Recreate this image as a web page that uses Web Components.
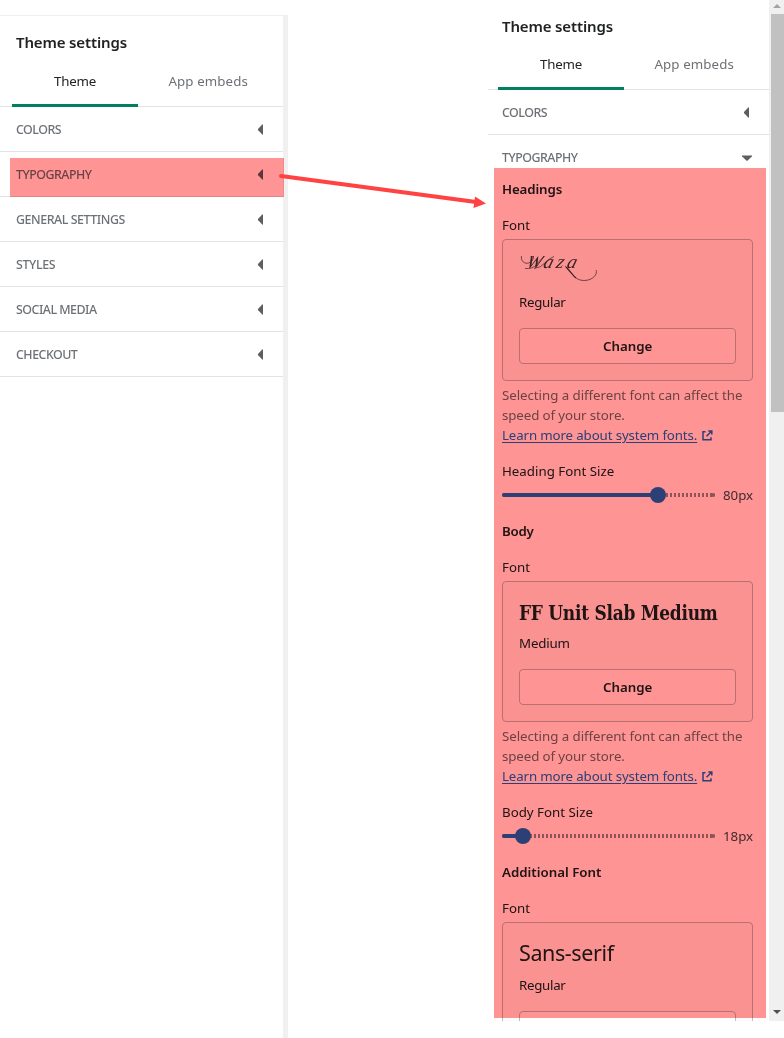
<!DOCTYPE html>
<html lang="en"><head><meta charset="utf-8"><title>Theme settings</title>
<style>
html,body{margin:0;height:1038px;overflow:hidden;background:#fff}
body{font:13.3px/20px "Noto Sans","Open Sans",sans-serif;color:#202223}
</style></head><body><theme-page></theme-page>
<script>
const define=(name,html,init)=>customElements.define(name,class extends HTMLElement{
  connectedCallback(){
    if(this.shadowRoot)return;
    this.attachShadow({mode:'open'}).innerHTML=html(this);
    if(init)init(this);
  }
});
/* One line of text, tracked so that it fills the given width. */
define('fit-text',e=>`<style>:host{display:inline-block;white-space:nowrap;width:${e.getAttribute('w')}px}</style><span><slot></slot></span>`,e=>{
  const s=e.shadowRoot.querySelector('span'),n=e.textContent.length;
  s.style.letterSpacing=((+e.getAttribute('w')-s.offsetWidth)/n)+'px';
});
define('caret-icon',e=>`<style>:host{display:block;width:20px;height:20px}svg{display:block}</style>
<svg width="20" height="20" viewBox="0 0 20 20"><path fill="#5c5f62" d="${e.hasAttribute('open')?'M5.2 7.5h9.6q.7.3.2.8l-4.3 4.2q-.7.6-1.4 0L5 8.300q-.5-.5.2-.8z':'M12 4.700v9.600q-.3.700-.8.200l-4-4.300q-.6-.7 0-1.400l4-4.300q.5-.5.800.2z'}"/></svg>`);
define('settings-header',()=>`<style>
:host{display:block;border-bottom:1px solid #e1e3e5;height:90px;box-sizing:border-box;padding:0 5px 0 12px}
h2{margin:0;padding:14px 0 0 4px;font-size:15px;font-weight:600;line-height:24px}
nav{display:flex;margin-top:4px;height:48px;text-align:center;line-height:44px}
div{box-sizing:border-box;flex:none;width:126px;height:48px;border-bottom:3px solid #008060;border-radius:2px 2px 0 0}
div+div{width:140px;border-color:transparent;color:#6d7175}
:host([tall]) nav{margin-top:5px}
</style><h2><fit-text w="111">Theme settings</fit-text></h2><nav><div><fit-text w="42">Theme</fit-text></div><div><fit-text w="79">App embeds</fit-text></div></nav>`);
define('settings-row',e=>`<style>
:host{display:flex;justify-content:space-between;align-items:center;height:45px;box-sizing:border-box;border-bottom:1px solid #e1e3e5;padding:1px 12px 0 16px;color:#6d7175;font-size:12.400px;font-weight:500}
:host([open]){height:44px;border:0;padding-top:1px}
</style><fit-text w="${e.getAttribute('w')}">${e.getAttribute('label')}</fit-text><caret-icon ${e.hasAttribute('open')?'open':''}></caret-icon>`);
define('font-card',e=>`<style>
:host{display:block;box-sizing:border-box;width:251px;border:1px solid #babfc3;border-radius:4px;background:#fafbfb;padding:16px}
.style{margin:4px 0 16px;height:20px}
button{display:block;box-sizing:border-box;width:217px;height:36px;border:1px solid #babfc3;border-radius:4px;background:#fff;font:inherit;font-weight:600;line-height:34px;color:#202223;padding:0}
</style><slot></slot><div class="style"><fit-text w="${e.getAttribute('w')}">${e.getAttribute('variant')}</fit-text></div><button><fit-text w="49">Change</fit-text></button>`);
define('script-preview',()=>`<style>
:host{display:block;position:relative;height:32px;width:90px;overflow:hidden;color:#3a3a3c}
b{display:block;font:italic 400 19px/22px "Liberation Serif",serif;transform:skewX(-16deg);margin:-5px 0 0 8px}
svg{position:absolute;left:0;top:0}
</style><b><fit-text w="53">Waza</fit-text></b><svg width="90" height="32" fill="none" stroke="#3a3a3c" stroke-width=".7"><path d="M2.500 0C1 6 8 10 13 5Q15 2 14.500 0M6 12.500Q14 13 17 9L25 0M15 12.500Q22 12 27 6Q31 2 35 .5M46 10C54 18 56 24.500 65 24.500C74 24.500 79 18 77 14"/><path stroke-width="1.100" d="M47 11C52 16 54 20 57 22"/></svg>`);
define('font-preview',e=>`<style>
:host{display:block;color:#202223;white-space:nowrap}
:host([slab]){height:31px}
:host([sans]){height:32px;font-size:21.500px;line-height:28px}
:host([slab]) .t{display:block;font:700 20.500px/30px "DejaVu Serif",serif;transform:scaleX(.83);transform-origin:0 50%;width:260px}
</style><div class="t"><slot></slot></div>`);
define('help-note',()=>`<style>
:host{display:block;height:60px;margin-top:4px;color:#6d7175}
.l{height:20px}.l:last-child{display:flex;align-items:center}a{color:#2c6ecb;height:20px}
a fit-text{text-decoration:underline;text-underline-offset:2px}svg{margin-left:5px}
</style><div class="l"><fit-text w="240">Selecting a different font can affect the</fit-text></div><div class="l"><fit-text w="123">speed of your store.</fit-text></div><div class="l"><a><fit-text w="195">Learn more about system fonts.</fit-text></a><svg width="11" height="11" viewBox="0 0 11 11" fill="none" stroke="#2c6ecb" stroke-width="1.500"><path d="M3.500 1.750H1v8h8V7.300M6.300.9h3.500v3.500M9.500 1.200L4.500 6.200"/></svg></div>`);
define('size-slider',e=>`<style>
:host{display:flex;align-items:center;height:20px;margin-top:4px;width:251px;color:#6d7175}
.track{position:relative;width:213px;height:4px;border-radius:2px;overflow:visible;background:repeating-linear-gradient(90deg,#8c9196 0 2px,transparent 2px 4px)}
.track:after{content:"";position:absolute;right:0;top:0;width:4px;height:4px;border-radius:2px;background:#8c9196}
.fill{width:${e.getAttribute('at')}px;height:4px;border-radius:2px;background:#2c6ecb}
.thumb{position:absolute;left:${e.getAttribute('at')-8}px;top:-6px;width:16px;height:16px;border-radius:50%;background:#2c6ecb}
.value{margin-left:8px;flex:1;text-align:right;color:#44474a}
</style><div class="track"><div class="fill"></div><div class="thumb"></div></div><div class="value"><fit-text w="30">${e.getAttribute('value')}</fit-text></div>`);
define('font-section',e=>`<style>
:host{display:block;margin-bottom:16px}
h3{margin:0 0 16px;font:inherit;font-weight:600;height:20px}.label{height:20px;margin-bottom:4px}
</style><h3><fit-text w="${e.getAttribute('w')}">${e.getAttribute('heading')}</fit-text></h3><div class="label"><fit-text w="28">Font</fit-text></div><slot></slot>`);
define('scroll-bar',()=>`<style>
:host{display:flex;flex-direction:column;width:15px;height:1021px;background:#f0f0f0;box-sizing:border-box;padding-left:2px}
.up,.down{width:13px;height:14px;display:block}.thumb{height:398px;background:#c1c1c1;flex:none}.space{flex:1}
</style><svg class="up"><path fill="#a3a3a3" d="M2 8l4-4 4 4z"/></svg><div class="thumb"></div><div class="space"></div><svg class="down"><path fill="#505050" d="M2 3h8l-4 4z"/></svg>`);
define('theme-page',()=>`<style>
:host{display:block;position:relative;width:784px;height:1038px;overflow:hidden;isolation:isolate;background:#fff}
.page{display:flex;justify-content:space-between;height:1038px}
.left{box-sizing:border-box;width:288px;height:1023px;margin-top:15px;border-right:5px solid #f0f0f0;border-top:1px solid #f0f0f0}
.left settings-header{height:91px}
.right{display:flex;width:296px;height:1021px;overflow:hidden}
main{width:281px;flex:none}
main settings-header{padding-left:10px}
main settings-row{padding-left:14px}
.body{padding-left:14px}
.sizes{height:20px;margin-top:16px}
.mark{position:absolute;background:#ff9494;mix-blend-mode:multiply}
.m1{left:10px;top:158px;width:274px;height:39px}.m2{left:494px;top:168px;width:272px;height:850px}
.arrow{position:absolute;left:270px;top:160px}
</style>
<div class="page"><div class="left"><settings-header tall></settings-header>
<settings-row label="COLORS" w="45"></settings-row><settings-row label="TYPOGRAPHY" w="76"></settings-row><settings-row label="GENERAL SETTINGS" w="109"></settings-row><settings-row label="STYLES" w="39"></settings-row><settings-row label="SOCIAL MEDIA" w="81"></settings-row><settings-row label="CHECKOUT" w="61"></settings-row></div>
<div class="right"><main><settings-header></settings-header><settings-row label="COLORS" w="45"></settings-row><settings-row open label="TYPOGRAPHY" w="76"></settings-row>
<div class="body">
<font-section heading="Headings" w="60"><font-card variant="Regular" w="47"><script-preview></script-preview></font-card><help-note></help-note><div class="sizes"><fit-text w="112">Heading Font Size</fit-text></div><size-slider at="156" value="80px"></size-slider></font-section>
<font-section heading="Body" w="32"><font-card variant="Medium" w="51"><font-preview slab><fit-text w="239">FF Unit Slab Medium</fit-text></font-preview></font-card><help-note></help-note><div class="sizes"><fit-text w="91">Body Font Size</fit-text></div><size-slider at="21" value="18px"></size-slider></font-section>
<font-section heading="Additional Font" w="99"><font-card variant="Regular" w="47"><font-preview sans><fit-text w="95">Sans-serif</fit-text></font-preview></font-card></font-section>
</div></main><scroll-bar></scroll-bar></div></div>
<div class="mark m1"></div><div class="mark m2"></div>
<svg class="arrow" width="230" height="60"><path d="M11 16L206 42" stroke="#ff4242" stroke-width="4" stroke-linecap="round"/><path d="M205 36.500L216 43.500L203.500 48z" fill="#ff4242"/></svg>`);
</script></body></html>
